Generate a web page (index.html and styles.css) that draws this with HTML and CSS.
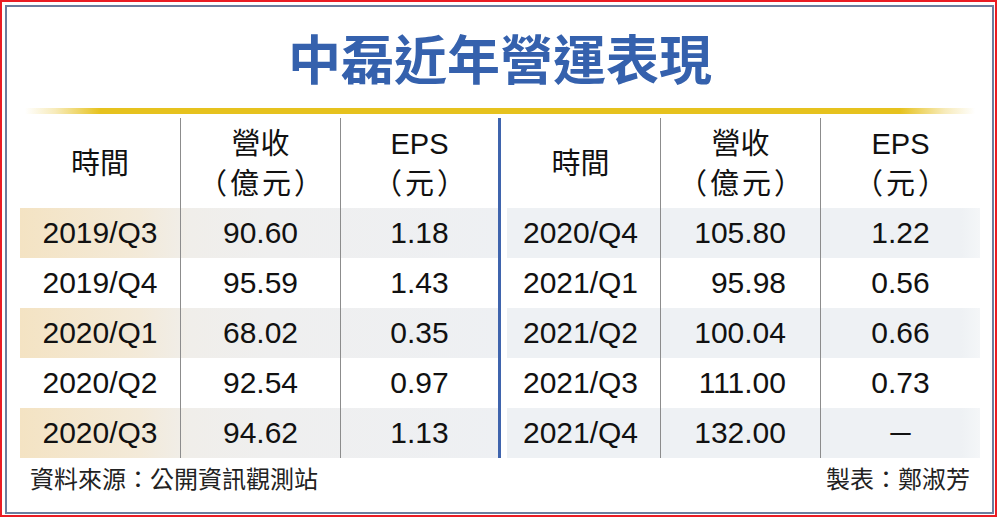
FILE: index.html
```html
<!DOCTYPE html>
<html lang="zh-Hant">
<head>
<meta charset="utf-8">
<title>中磊近年營運表現</title>
<link rel="stylesheet" href="styles.css">
</head>
<body>
<div class="frame">
  <div class="panel">
    <h1 class="title">中磊近年營運表現</h1>
    <div class="rule"></div>
    <div class="tables">
      <div class="half half-left">
        <div class="row head">
          <div class="cell c-time">時間</div>
          <div class="cell c-rev"><span>營收</span><span class="unit">（億元）</span></div>
          <div class="cell c-eps"><span>EPS</span><span class="unit">（元）</span></div>
        </div>
        <div class="row shade-l">
          <div class="cell c-time">2019/Q3</div>
          <div class="cell c-rev">90.60</div>
          <div class="cell c-eps">1.18</div>
        </div>
        <div class="row">
          <div class="cell c-time">2019/Q4</div>
          <div class="cell c-rev">95.59</div>
          <div class="cell c-eps">1.43</div>
        </div>
        <div class="row shade-l">
          <div class="cell c-time">2020/Q1</div>
          <div class="cell c-rev">68.02</div>
          <div class="cell c-eps">0.35</div>
        </div>
        <div class="row">
          <div class="cell c-time">2020/Q2</div>
          <div class="cell c-rev">92.54</div>
          <div class="cell c-eps">0.97</div>
        </div>
        <div class="row shade-l">
          <div class="cell c-time">2020/Q3</div>
          <div class="cell c-rev">94.62</div>
          <div class="cell c-eps">1.13</div>
        </div>
      </div>
      <div class="divider"></div>
      <div class="half half-right">
        <div class="row head">
          <div class="cell c-time">時間</div>
          <div class="cell c-rev"><span>營收</span><span class="unit">（億元）</span></div>
          <div class="cell c-eps"><span>EPS</span><span class="unit">（元）</span></div>
        </div>
        <div class="row shade-r">
          <div class="cell c-time">2020/Q4</div>
          <div class="cell c-rev num-r">105.80</div>
          <div class="cell c-eps">1.22</div>
        </div>
        <div class="row">
          <div class="cell c-time">2021/Q1</div>
          <div class="cell c-rev num-r">95.98</div>
          <div class="cell c-eps">0.56</div>
        </div>
        <div class="row shade-r">
          <div class="cell c-time">2021/Q2</div>
          <div class="cell c-rev num-r">100.04</div>
          <div class="cell c-eps">0.66</div>
        </div>
        <div class="row">
          <div class="cell c-time">2021/Q3</div>
          <div class="cell c-rev num-r">111.00</div>
          <div class="cell c-eps">0.73</div>
        </div>
        <div class="row shade-r">
          <div class="cell c-time">2021/Q4</div>
          <div class="cell c-rev num-r">132.00</div>
          <div class="cell c-eps dash">－</div>
        </div>
      </div>
    </div>
    <div class="foot">
      <span>資料來源：公開資訊觀測站</span>
      <span>製表：鄭淑芳</span>
    </div>
  </div>
</div>
</body>
</html>
```

FILE: styles.css
```css
* { box-sizing: border-box; }

html, body {
  margin: 0;
  padding: 0;
  background: #ffffff;
}

.frame {
  width: 997px;
  height: 517px;
  border: 2px solid #ea1c24;
  padding: 3px 1px 1px 3px;
  background: #ffffff;
}

.panel {
  width: 100%;
  height: 100%;
  border: 2px solid #6b7d9e;
  padding: 0 12px 0 13px;
  display: flex;
  flex-direction: column;
  font-family: "Liberation Sans", "Noto Sans CJK TC", sans-serif;
  color: #111111;
}

.title {
  margin: 20px 0 0 0;
  height: 60px;
  line-height: 60px;
  font-family: "Noto Sans CJK TC", sans-serif;
  font-weight: 700;
  font-size: 53px;
  color: #3561ad;
  text-align: center;
  letter-spacing: 0;
}

.rule {
  margin: 21px 5px 0 5px;
  height: 6px;
  background: linear-gradient(to right,
    rgba(230, 194, 30, 0) 0px,
    rgba(232, 198, 60, 0.35) 30px,
    #e6c21e 75px,
    #e6c21e calc(100% - 75px),
    rgba(232, 198, 60, 0.35) calc(100% - 30px),
    rgba(230, 194, 30, 0) 100%);
}

.tables {
  margin-top: 4px;
  display: flex;
}

.half {
  display: flex;
  flex-direction: column;
}

.half-left { width: 478px; }
.half-right { width: 479px; }

.divider {
  width: 3px;
  background: #3f64ad;
}

.row {
  display: grid;
  height: 50px;
}

.half-left .row { grid-template-columns: 160px 160px 158px; }
.half-right .row { grid-template-columns: 159px 160px 160px; }

.row.head {
  height: 90px;
}

.cell {
  display: flex;
  align-items: center;
  justify-content: center;
  text-align: center;
  font-size: 30px;
  line-height: 40px;
  white-space: nowrap;
}

.row .c-rev,
.row .c-eps {
  border-left: 1px solid #8c8c8c;
}

.head .cell {
  flex-direction: column;
  font-size: 29px;
  padding-top: 2px;
}

.head .unit {
  letter-spacing: 3px;
  text-indent: 3px;
}

.num-r {
  justify-content: flex-end;
  padding-right: 34px;
}

.dash {
  font-family: "Noto Sans CJK TC", sans-serif;
  font-size: 28px;
}

.shade-l {
  background: linear-gradient(to right,
    #f4e3c3 0px,
    #f3ead9 120px,
    #f0eeea 170px,
    #efefef 250px,
    #eef0f3 478px);
}

.shade-r {
  background: linear-gradient(to right,
    rgba(255, 255, 255, 0) 0px,
    rgba(255, 255, 255, 0) 6px,
    #eef1f4 6px,
    #eef1f4 460px,
    #f4f6f8 479px);
}

.foot {
  margin-top: 5px;
  padding: 0 10px 0 10px;
  display: flex;
  justify-content: space-between;
  font-family: "Noto Sans CJK TC", sans-serif;
  font-size: 24px;
  line-height: 30px;
  color: #222222;
}
```
